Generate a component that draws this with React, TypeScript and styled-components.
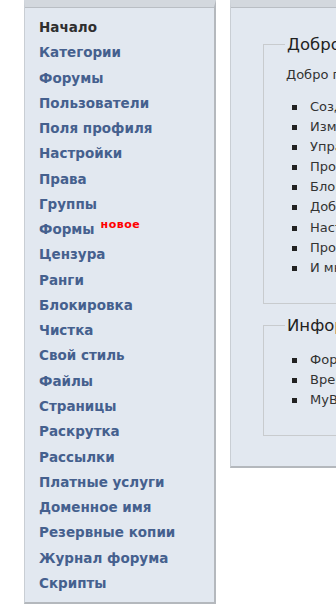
import React from 'react'
import styled, { createGlobalStyle } from 'styled-components'

const Global = createGlobalStyle`
  html, body {
    margin: 0;
    padding: 0;
    background: #ffffff;
    overflow: hidden;
  }
  body {
    font-family: "DejaVu Sans", Verdana, sans-serif;
    color: #333333;
  }
`

const Page = styled.div`
  display: flex;
  align-items: flex-start;
  gap: 14px;
  padding-left: 24px;
  width: 900px;
`

const Panel = styled.div<{ $width: number }>`
  flex: none;
  width: ${(p) => p.$width}px;
  background: #e2e8f0;
  border-top: 7px solid #d3d8de;
  border-left: 1px solid #c9ced4;
  border-right: 2px solid #b4b8bd;
  border-bottom: 2px solid #b4b8bd;
  box-shadow: inset 0 1px 0 #b9bec4;
`

const Menu = styled.ul`
  list-style: none;
  margin: 0;
  padding: 8px 0 6px 14px;
`

const MenuItem = styled.li<{ $active?: boolean }>`
  height: 25.27px;
  line-height: 25.27px;
  font-size: 13.5px;
  font-weight: bold;
  color: ${(p) => (p.$active ? '#2f2f2f' : '#45608e')};
  white-space: nowrap;
`

const Badge = styled.sup`
  font-size: 11px;
  color: #ff0000;
  margin-left: 6px;
  letter-spacing: 0.5px;
  vertical-align: 6px;
  line-height: 0;
`

const Content = styled.div`
  padding: 28px 0 30px 32px;
  display: flex;
  flex-direction: column;
  gap: 12px;
`

const Box = styled.fieldset<{ $height: number }>`
  margin: 0;
  height: ${(p) => p.$height}px;
  box-sizing: border-box;
  border: 1px solid #c8cbce;
  padding: 0 0 0 22px;
`

const Legend = styled.legend`
  font-size: 16.5px;
  padding: 0 2px;
  margin-left: -1px;
  color: #222222;
`

const Lead = styled.p`
  margin: 13px 0 15px;
  font-size: 13px;
`

const List = styled.ul<{ $top: number }>`
  list-style: none;
  margin: ${(p) => p.$top}px 0 0;
  padding-left: 24px;
  font-size: 13px;
  line-height: 20.1px;
`

const Item = styled.li`
  position: relative;
  white-space: nowrap;
  &::before {
    content: '';
    position: absolute;
    left: -18px;
    top: 8px;
    width: 5px;
    height: 5px;
    background: #222222;
  }
`

const menu = [
  'Начало',
  'Категории',
  'Форумы',
  'Пользователи',
  'Поля профиля',
  'Настройки',
  'Права',
  'Группы',
  'Формы',
  'Цензура',
  'Ранги',
  'Блокировка',
  'Чистка',
  'Свой стиль',
  'Файлы',
  'Страницы',
  'Раскрутка',
  'Рассылки',
  'Платные услуги',
  'Доменное имя',
  'Резервные копии',
  'Журнал форума',
  'Скрипты',
]

const features = [
  'Создание форумов и категорий',
  'Изменение настроек форума',
  'Управление пользователями',
  'Просмотр статистики',
  'Блокировка нарушителей',
  'Добавление модераторов',
  'Настройка внешнего вида',
  'Просмотр журнала форума',
  'И многое другое',
]

const info = ['Форум', 'Время сервера', 'MyBB']

export default function App() {
  return (
    <>
      <Global />
      <Page>
        <Panel $width={189}>
          <Menu>
            {menu.map((item, i) => (
              <MenuItem key={item} $active={i === 0}>
                {item}
                {item === 'Формы' && <Badge>новое</Badge>}
              </MenuItem>
            ))}
          </Menu>
        </Panel>
        <Panel $width={600}>
          <Content>
            <Box $height={269}>
              <Legend>Добро пожаловать</Legend>
              <Lead>Добро пожаловать в панель администратора.</Lead>
              <List $top={0}>
                {features.map((f) => (
                  <Item key={f}>{f}</Item>
                ))}
              </List>
            </Box>
            <Box $height={120}>
              <Legend>Информация</Legend>
              <List $top={15}>
                {info.map((f) => (
                  <Item key={f}>{f}</Item>
                ))}
              </List>
            </Box>
          </Content>
        </Panel>
      </Page>
    </>
  )
}
